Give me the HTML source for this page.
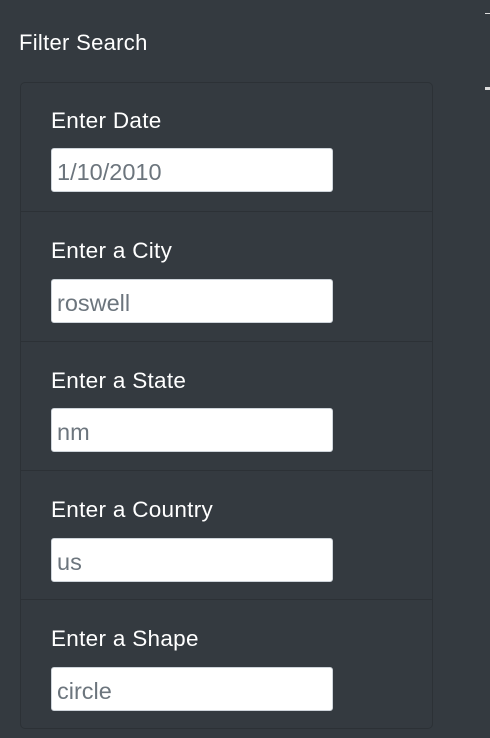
<!DOCTYPE html>
<html><head><style>
html,body{margin:0;padding:0;width:490px;height:738px;overflow:hidden;background:#343a40;font-family:"Liberation Sans",sans-serif;}
.t{position:absolute;left:19px;top:30px;color:#fff;font-size:22px;letter-spacing:0.3px;}
.panel{position:absolute;left:20px;top:82px;width:413px;height:647px;border:1px solid #2c3136;border-radius:5px;box-sizing:border-box;}
.sec{position:absolute;left:0;width:100%;border-top:1px solid #2c3136;}
.lab{position:absolute;left:30px;color:#fff;font-size:22.5px;letter-spacing:0.3px;}
.in{position:absolute;left:30px;width:282px;height:44px;background:#fff;border:1px solid #ced4da;border-radius:3px;box-sizing:border-box;color:#6c757d;font-size:23.5px;padding-left:5px;line-height:46px;}
.r1{position:absolute;left:485px;top:13px;width:5px;height:1px;background:#ddd;}
.r2{position:absolute;left:485px;top:87px;width:5px;height:3px;background:#ddd;}
</style></head><body>
<div class="t">Filter Search</div>
<div class="r1"></div><div class="r2"></div>
<div class="panel">
<div class="sec" style="top:-1px;border-top:none"><div class="lab" style="top:26px">Enter Date</div><div class="in" style="top:66px">1/10/2010</div></div>
<div class="sec" style="top:128px"><div class="lab" style="top:26px">Enter a City</div><div class="in" style="top:67px">roswell</div></div>
<div class="sec" style="top:258px"><div class="lab" style="top:26px">Enter a State</div><div class="in" style="top:66px">nm</div></div>
<div class="sec" style="top:387px"><div class="lab" style="top:26px">Enter a Country</div><div class="in" style="top:67px">us</div></div>
<div class="sec" style="top:516px"><div class="lab" style="top:26px">Enter a Shape</div><div class="in" style="top:67px">circle</div></div>
</div>
</body></html>
